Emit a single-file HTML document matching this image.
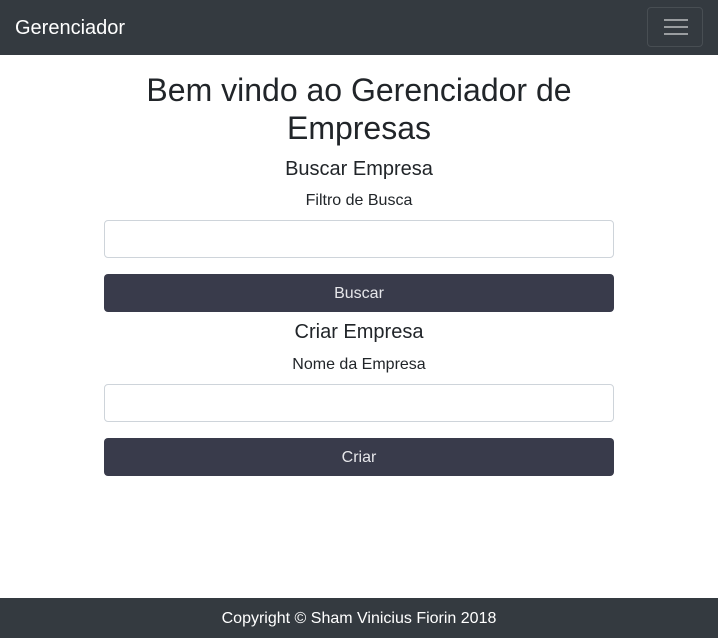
<!DOCTYPE html>
<html><head><meta charset="utf-8"><style>
*{box-sizing:border-box;margin:0;padding:0}
body{width:718px;height:638px;position:relative;background:#fff;font-family:"Liberation Sans",sans-serif;color:#212529;overflow:hidden}
.nav{position:absolute;left:0;top:0;width:718px;height:55px;background:#343a40}
.brand{position:absolute;left:15px;top:16px;font-size:20px;line-height:24px;color:#fff}
.tog{position:absolute;left:647px;top:7px;width:56px;height:40px;border:1px solid rgba(255,255,255,.1);border-radius:4px}
.tog i{position:absolute;left:16px;width:24px;height:2px;background:rgba(255,255,255,.5)}
.t{position:absolute;left:0;width:718px;text-align:center}
.inp{position:absolute;left:104px;width:510px;height:38px;border:1px solid #ced4da;border-radius:4px;background:#fff}
.btn{position:absolute;left:104px;width:510px;height:38px;border-radius:4px;background:#393b4b;color:#e6e6ea;font-size:16px;line-height:40px;text-align:center}
.foot{position:absolute;left:0;top:598px;width:718px;height:40px;background:#343a40;color:#fff;font-size:16px;line-height:42px;text-align:center}
</style></head><body>
<div class="nav"><div class="brand">Gerenciador</div><div class="tog"><i style="top:11px"></i><i style="top:18px"></i><i style="top:25px"></i></div></div>
<div class="t" style="top:71px;font-size:32px;line-height:38px">Bem vindo ao Gerenciador de<br>Empresas</div>
<div class="t" style="top:157px;font-size:20px;line-height:24px">Buscar Empresa</div>
<div class="t" style="top:191px;font-size:16px;line-height:19px">Filtro de Busca</div>
<div class="inp" style="top:220px"></div>
<div class="btn" style="top:274px">Buscar</div>
<div class="t" style="top:320px;font-size:20px;line-height:24px">Criar Empresa</div>
<div class="t" style="top:355px;font-size:16px;line-height:19px">Nome da Empresa</div>
<div class="inp" style="top:384px"></div>
<div class="btn" style="top:438px">Criar</div>
<div class="foot">Copyright © Sham Vinicius Fiorin 2018</div>
</body></html>
